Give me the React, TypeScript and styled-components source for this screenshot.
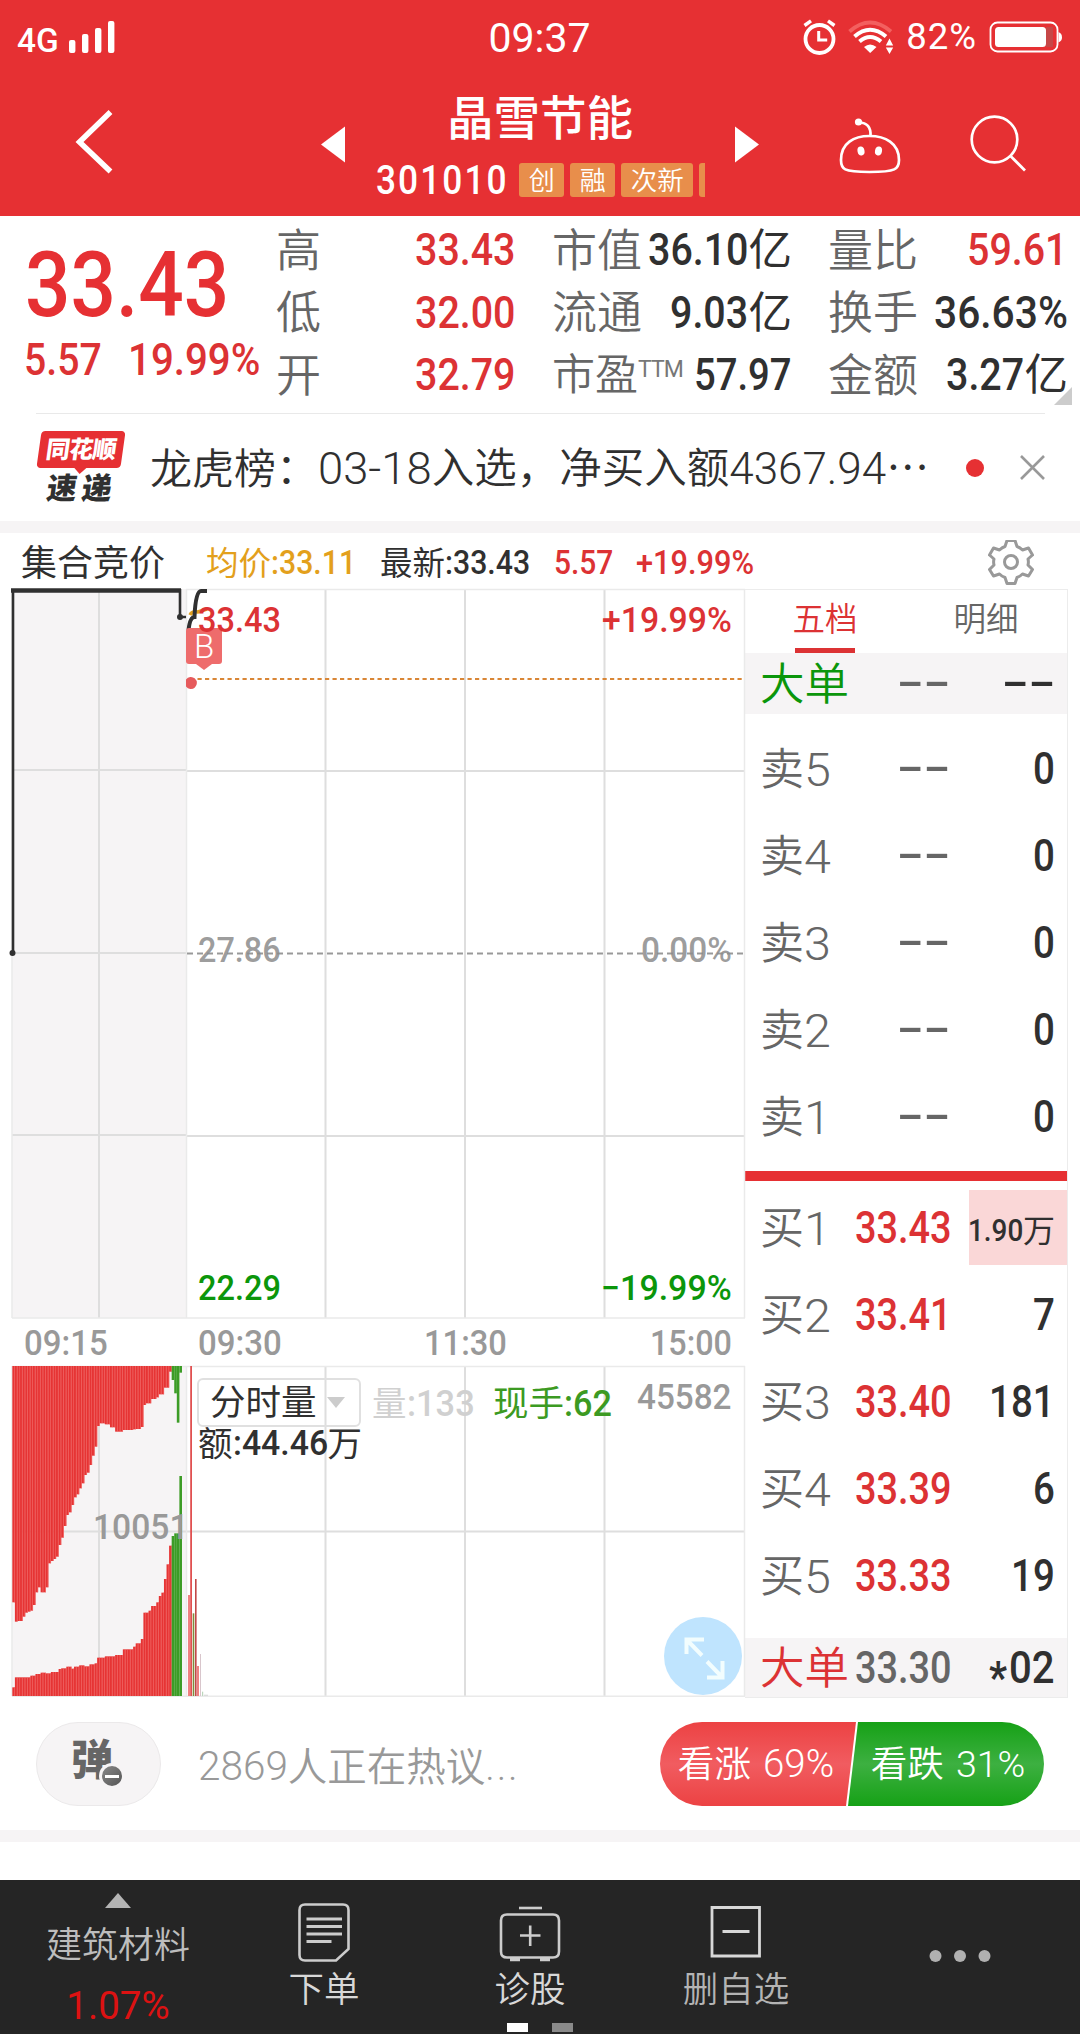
import React from "react";
import styled, { createGlobalStyle } from "styled-components";

const RED = "#e63033";
const NUM_RED = "#dc3234";
const INK = "#303030";
const GREY = "#666";
const AXIS = "#999";
const BAND = "#f6f4f5";

const Global = createGlobalStyle`
  * { box-sizing: border-box; }
  body { margin: 0; background: #fff; }
`;

const FONT = `Roboto, "Noto Sans CJK SC", sans-serif`;

/* ---------- text primitives ---------- */

const Cjk = styled.span<{ $size: number; $c?: string; $w?: number; $ls?: number }>`
  display: block;
  flex: none;
  font-family: ${FONT};
  font-size: ${(p) => p.$size}px;
  font-weight: ${(p) => p.$w ?? 350};
  color: ${(p) => p.$c ?? INK};
  letter-spacing: ${(p) => p.$ls ?? 0}px;
  line-height: 1;
  padding-top: 0.08em;
  white-space: nowrap;
`;

const NumText = styled.span<{ $size: number; $c: string; $w: number; $sx: number; $ls: number; $shrink: number }>`
  display: block;
  flex: none;
  font-family: ${FONT};
  font-size: ${(p) => p.$size}px;
  font-weight: ${(p) => p.$w};
  color: ${(p) => p.$c};
  letter-spacing: ${(p) => p.$ls}px;
  line-height: 1;
  padding-top: 0.03em;
  white-space: nowrap;
  transform: scaleX(${(p) => p.$sx});
  transform-origin: 0 50%;
  margin-right: ${(p) => p.$shrink}px;
`;

const ADVANCE: Record<string, number> = { ".": 0.28, ":": 0.258, "%": 0.74, "+": 0.557, "-": 0.35, "*": 0.45 };

/* Condensed figures: the box is pulled in by what the horizontal scale takes away. */
function Num({ children, size, c = INK, w = 500, sx = 0.875, ls = 0 }: {
  children: string; size: number; c?: string; w?: number; sx?: number; ls?: number;
}) {
  const natural = [...children].reduce((s, ch) => s + (ADVANCE[ch] ?? 0.565) * size + ls, 0);
  return (
    <NumText $size={size} $c={c} $w={w} $sx={sx} $ls={ls} $shrink={natural * (sx - 1)}>
      {children}
    </NumText>
  );
}

/* ---------- frame ---------- */

const Screen = styled.main`
  width: 1080px;
  height: 2034px;
  display: flex;
  flex-direction: column;
  overflow: hidden;
  background: #fff;
`;

const Band = styled.div`
  flex: none;
  height: 12px;
  background: ${BAND};
`;

/* ---------- header ---------- */

const Header = styled.header`
  flex: none;
  height: 216px;
  background: ${RED};
`;

const StatusBar = styled.div`
  height: 76px;
  display: grid;
  grid-template-columns: 1fr auto 1fr;
  align-items: center;
  padding: 0 18px 0 17px;
`;

const StatusSide = styled.div<{ $end?: boolean }>`
  display: flex;
  align-items: center;
  justify-content: ${(p) => (p.$end ? "flex-end" : "flex-start")};
  gap: ${(p) => (p.$end ? 12 : 10)}px;
  height: 76px;
  padding-bottom: 2px;
`;

const CarrierText = styled.div`
  padding-top: 4px;
`;

const TitleBar = styled.div`
  height: 140px;
  display: flex;
`;

const IconSlot = styled.div<{ $w: number }>`
  width: ${(p) => p.$w}px;
  flex: none;
`;

const TitleBlock = styled.div`
  width: 390px;
  display: flex;
  flex-direction: column;
  align-items: center;
  padding-top: 16px;
`;

const CodeRow = styled.div`
  display: flex;
  align-items: center;
  width: 329px;
  height: 34px;
  margin-top: 21px;
`;

const Badge = styled.span<{ $w: number; $ml?: number }>`
  flex: none;
  width: ${(p) => p.$w}px;
  height: 34px;
  margin-left: ${(p) => p.$ml ?? 6}px;
  border-radius: 3px;
  background: #e88e4b;
  display: flex;
  align-items: center;
  justify-content: center;
`;

const BadgeEdge = styled.span`
  flex: none;
  width: 6px;
  height: 34px;
  margin-left: 6px;
  border-radius: 3px 0 0 3px;
  background: #e88e4b;
`;

/* ---------- quote ---------- */

const Quote = styled.section`
  flex: none;
  height: 197px;
  display: flex;
  position: relative;
`;

const PriceBlock = styled.div`
  width: 277px;
  padding: 19px 0 0 24px;
`;

const PriceLine = styled.div<{ $h: number; $gap?: number; $pl?: number }>`
  display: flex;
  align-items: center;
  height: ${(p) => p.$h}px;
  gap: ${(p) => p.$gap ?? 0}px;
  padding-left: ${(p) => p.$pl ?? 0}px;
`;

const StatColumn = styled.div<{ $w: number; $ml: number }>`
  width: ${(p) => p.$w}px;
  flex: none;
  margin-left: ${(p) => p.$ml}px;
  padding-top: 2px;
`;

const StatRow = styled.div`
  display: flex;
  align-items: center;
  justify-content: space-between;
  height: 62.5px;
`;

const Inline = styled.div<{ $gap?: number }>`
  display: flex;
  align-items: center;
  gap: ${(p) => p.$gap ?? 0}px;
`;

const Ttm = styled.sup`
  font: 400 23px/1 ${FONT};
  color: #777;
  align-self: flex-start;
  margin-top: 7px;
  letter-spacing: -1px;
`;

const MoreCorner = styled.i`
  position: absolute;
  right: 8px;
  bottom: 8px;
  border-style: solid;
  border-width: 0 0 18px 18px;
  border-color: transparent transparent #ccc transparent;
`;

/* ---------- news ---------- */

const News = styled.section`
  flex: none;
  height: 108px;
  display: flex;
  align-items: center;
  position: relative;
  padding: 1px 0 0 37px;
  background: linear-gradient(#e9e9e9, #e9e9e9) 36px 0 / 1009px 1px no-repeat;
`;

const NewsLogo = styled.div`
  flex: none;
  width: 88px;
  height: 74px;
  display: flex;
  flex-direction: column;
  align-items: center;
`;

const NewsTag = styled.div`
  position: relative;
  flex: none;
  width: 84px;
  height: 37px;
  border-radius: 4px;
  background: ${RED};
  transform: skewX(-8deg);
  display: flex;
  align-items: center;
  justify-content: center;
  font: 900 24px/1 ${FONT};
  letter-spacing: -0.8px;
  color: #fff;
  &::after {
    content: "";
    position: absolute;
    left: 37px;
    top: 36px;
    border: 7px solid transparent;
    border-top-color: ${RED};
    border-bottom: 0;
  }
`;

const NewsWord = styled.div`
  margin-top: 6px;
  font: 900 30px/1 ${FONT};
  letter-spacing: 5px;
  padding-left: 1px;
  color: ${INK};
  transform: skewX(-8deg);
`;

const NewsText = styled.div`
  flex: none;
  width: 780px;
  margin-left: 25px;
  padding-top: 1px;
  display: flex;
  align-items: center;
`;

const Dot = styled.i`
  flex: none;
  width: 18px;
  height: 18px;
  border-radius: 50%;
  background: ${RED};
  margin: 0 36px;
`;

/* ---------- chart section ---------- */

const ChartHead = styled.div`
  flex: none;
  height: 56px;
  display: flex;
  align-items: center;
  padding: 3px 0 0 21px;
`;

const HeadItem = styled.div<{ $w: number }>`
  width: ${(p) => p.$w}px;
  display: flex;
  align-items: center;
`;

const Body = styled.section`
  flex: none;
  display: flex;
  height: 1109px;
  padding-left: 12px;
`;

const Charts = styled.div`
  width: 733px;
`;

const Plot = styled.div<{ $h: number }>`
  position: relative;
  height: ${(p) => p.$h}px;
  & > svg { display: block; margin-left: -12px; overflow: visible; }
`;

const Label = styled.div<{ $y: number; $x?: number; $r?: number }>`
  position: absolute;
  top: ${(p) => p.$y - 18}px;
  height: 36px;
  display: flex;
  align-items: center;
  ${(p) => (p.$r !== undefined ? `right: ${p.$r}px;` : `left: ${p.$x}px;`)}
`;

const Axis = styled.div`
  height: 48px;
  display: flex;
  align-items: center;
  padding-top: 2px;
`;

const Tick = styled.div<{ $pl: number; $w: number }>`
  width: ${(p) => p.$w}px;
  padding-left: ${(p) => p.$pl}px;
`;

const BuyMark = styled.div`
  position: absolute;
  left: 174px;
  top: 39px;
  width: 36px;
  height: 36px;
  border-radius: 3px;
  background: #ee6c6c;
  color: #fff;
  font: 350 33px/38px ${FONT};
  text-align: center;
  &::after {
    content: "";
    position: absolute;
    left: 10px;
    top: 36px;
    border: 8px solid transparent;
    border-top: 6px solid #ee6c6c;
    border-bottom: 0;
  }
`;

const Picker = styled.button`
  position: absolute;
  left: 185px;
  top: 12px;
  width: 164px;
  height: 49px;
  padding: 0 14px 0 11px;
  border: 2px solid #e0e0e0;
  border-radius: 6px;
  background: transparent;
  display: flex;
  align-items: center;
  justify-content: space-between;
`;

const Caret = styled.i`
  border: 9px solid transparent;
  border-top: 11px solid #ccc;
  border-bottom: 0;
`;

const Expand = styled.button`
  position: absolute;
  left: 652px;
  top: 251px;
  width: 78px;
  height: 78px;
  padding: 0;
  border: 0;
  border-radius: 50%;
  background: #bfe4fe;
`;

/* ---------- order book ---------- */

const Book = styled.aside`
  width: 323px;
  border: 1px solid #ececec;
  border-left: 0;
  display: flex;
  flex-direction: column;
`;

const Tabs = styled.div`
  height: 63px;
  display: flex;
  padding-left: 50px;
  gap: 101px;
`;

const Tab = styled.div<{ $on?: boolean }>`
  width: 60px;
  display: flex;
  justify-content: center;
  padding-top: 11px;
  border-bottom: 5px solid ${(p) => (p.$on ? NUM_RED : "transparent")};
`;

const BookRow = styled.div<{ $h: number; $tint?: boolean }>`
  height: ${(p) => p.$h}px;
  flex: none;
  display: grid;
  grid-template-columns: 95px 114px minmax(0, 1fr);
  align-items: center;
  padding-left: 15px;
  background: ${(p) => (p.$tint ? BAND : "transparent")};
`;

const Side = styled.div`
  display: flex;
  align-items: center;
`;

const NoPrice = styled.div`
  padding: 0 0 4px 42px;
`;

const Qty = styled.div<{ $hot?: boolean; $none?: boolean }>`
  display: flex;
  align-items: center;
  justify-content: flex-end;
  height: ${(p) => (p.$hot ? "75px" : "auto")};
  background: ${(p) => (p.$hot ? "#fad7d7" : "transparent")};
  padding: ${(p) => (p.$hot ? "4px 12px 0 0" : p.$none ? "0 11px 4px 0" : "0 12px 0 0")};
`;

const Star = styled.div`
  height: 44px;
  padding-top: 9px;
  margin-right: 2px;
`;

const Group = styled.div<{ $pt: number; $h: number }>`
  height: ${(p) => p.$h}px;
  padding-top: ${(p) => p.$pt}px;
`;

const Divider = styled.div`
  height: 10px;
  background: ${RED};
`;

/* ---------- talk row ---------- */

const Talk = styled.section`
  flex: none;
  height: 132px;
  display: flex;
  padding: 24px 36px;
`;

const Pill = styled.div`
  position: relative;
  flex: none;
  width: 125px;
  height: 84px;
  border-radius: 42px;
  border: 1px solid #ebe9ea;
  background: ${BAND};
  padding: 17px 0 0 34px;
  font: 900 42px/1 ${FONT};
  color: ${GREY};
`;

const MinusBadge = styled.i`
  position: absolute;
  left: 62px;
  top: 40px;
  width: 26px;
  height: 26px;
  border-radius: 50%;
  border: 3px solid ${BAND};
  background: linear-gradient(#fff, #fff) center / 14px 3px no-repeat, linear-gradient(135deg, #888, #555);
`;

const TalkText = styled.div`
  display: flex;
  align-items: center;
  width: 460px;
  padding: 4px 0 0 37px;
`;

const Vote = styled.div`
  margin-left: auto;
  width: 384px;
  height: 84px;
  border-radius: 42px;
  overflow: hidden;
  display: flex;
`;

const VoteHalf = styled.button<{ $up?: boolean }>`
  flex: none;
  width: ${(p) => (p.$up ? 196 : 198)}px;
  margin-left: ${(p) => (p.$up ? 0 : -10)}px;
  padding: 0 ${(p) => (p.$up ? 4 : 2)}px 0 ${(p) => (p.$up ? 0 : 8)}px;
  border: 0;
  display: flex;
  align-items: center;
  justify-content: center;
  gap: 12px;
  background: ${(p) =>
    p.$up
      ? "linear-gradient(#ec4243, #f15c60 50%, #ec4243)"
      : "linear-gradient(#16a116, #3db041 50%, #16a116)"};
  clip-path: ${(p) =>
    p.$up ? "polygon(0 0, 100% 0, 186px 100%, 0 100%)" : "polygon(12px 0, 100% 0, 100% 100%, 2px 100%)"};
`;

/* ---------- bottom bar ---------- */

const Nav = styled.nav`
  flex: none;
  height: 154px;
  margin-top: 38px;
  background: #252525;
  display: flex;
  position: relative;
`;

const NavItem = styled.div<{ $w: number; $pt: number; $gap: number; $pl?: number }>`
  flex: none;
  width: ${(p) => p.$w}px;
  padding-top: ${(p) => p.$pt}px;
  padding-left: ${(p) => p.$pl ?? 0}px;
  display: flex;
  flex-direction: column;
  align-items: center;
  gap: ${(p) => p.$gap}px;
  svg { display: block; flex: none; }
`;

const Change = styled.div`
  padding-top: 5px;
`;

const UpTriangle = styled.i`
  border: 13px solid transparent;
  border-bottom: 15px solid #b4b4b4;
  border-top: 0;
`;

const Pager = styled.div`
  position: absolute;
  left: 507px;
  bottom: 2px;
  display: flex;
  gap: 24px;
`;

const Page = styled.i<{ $on?: boolean }>`
  width: 21px;
  height: 9px;
  background: ${(p) => (p.$on ? "#fff" : "#8a8a8a")};
`;

/* ---------- chart data ---------- */

type Step = [number, number];

const askSteps: Step[] = [
  [37, 967], [45, 1025], [52, 1023], [68, 1010], [75, 998], [83, 995], [90, 992], [98, 975], [106, 937], [114, 922],
  [121, 937], [136, 922], [143, 850], [151, 843], [159, 837], [167, 830], [174, 795], [182, 773], [190, 738],
  [197, 705], [205, 697], [213, 675], [220, 652], [227, 643], [234, 625], [242, 610], [249, 585], [257, 578],
  [264, 555], [272, 527], [280, 500], [288, 438], [296, 430], [312, 433], [327, 442], [342, 455], [365, 450],
  [395, 448], [410, 447], [418, 441], [426, 375], [440, 370], [455, 357], [470, 352], [478, 343], [493, 323],
  [508, 275], [516, 300], [523, 340], [531, 428], [539, 278],
];

const bidSteps: Step[] = [
  [37, 1222], [45, 1192], [90, 1187], [106, 1182], [121, 1178], [136, 1180], [151, 1176], [174, 1167], [182, 1165],
  [197, 1160], [213, 1166], [220, 1160], [235, 1156], [250, 1159], [264, 1153], [280, 1150], [288, 1133],
  [312, 1129], [342, 1125], [365, 1108], [395, 1100], [403, 1090], [418, 1077], [426, 1007], [433, 998],
  [448, 992], [456, 978], [470, 967], [478, 948], [486, 938], [493, 897], [501, 853], [508, 797], [516, 768],
  [523, 760], [531, 760], [539, 588],
];

const BAR = 7.71;
const valueAt = (steps: Step[], x: number) =>
  steps.reduce((v, s) => (s[0] <= x + 3 ? s[1] : v), steps[0][1]);

const bars = Array.from({ length: 66 }, (_, i) => {
  const x = 37 + i * BAR;
  return {
    x: x / 3,
    ask: (valueAt(askSteps, x) - 258) / 3,
    bid: (valueAt(bidSteps, x) - 258) / 3,
    green: i >= 62,
  };
});

const tradeBars: [number, number, number, string][] = [
  [188, 945, 2, "#f08080"],
  [190.2, 258, 1.8, "#e05050"],
  [192.7, 1000, 1.6, "#7f8a3a"],
  [195, 897, 1.6, "#c24848"],
  [197, 1158, 2, "#ee7f7f"],
  [200, 1122, 1, "#d9c6cc"],
  [202, 1235, 1.2, "#bcd6bc"],
  [204, 1244, 4, "#dcdcdc"],
];

const GRID_X = [325.5, 465, 604.5];

/* ---------- pieces ---------- */

function SignalIcon() {
  return (
    <svg width="46" height="34" viewBox="0 0 46 34" fill="#fff">
      <rect x="0" y="20" width="6.4" height="13" rx="2" />
      <rect x="13" y="14" width="6.4" height="19" rx="2" />
      <rect x="26" y="8" width="6.4" height="25" rx="2" />
      <rect x="39" y="1" width="6.4" height="32" rx="2" />
    </svg>
  );
}

function AlarmIcon() {
  return (
    <svg width="33" height="36" viewBox="0 0 33 36" fill="none" stroke="#fff">
      <circle cx="16.5" cy="20" r="14" strokeWidth="3.8" />
      <path d="M15.7 12v9h8.5" strokeWidth="3" />
      <path d="M1.5 6.5 8 1.8M31.5 6.5 25 1.8" strokeWidth="3.4" />
    </svg>
  );
}

function WifiIcon() {
  return (
    <svg width="46" height="34" viewBox="0 0 46 34" fill="none">
      <path d="M1.5 11.5Q22 -6.5 43 11.5" stroke="#f3605f" strokeWidth="3.8" />
      <path d="M6.5 16.5Q22 3 38 16.5" stroke="#fff" strokeWidth="4" />
      <path d="M11.5 21.5Q22 12.5 33 21.5" stroke="#fff" strokeWidth="4" />
      <path d="M16 27Q22 22 28.5 27L22.2 33z" fill="#fff" />
      <path d="M37.8 25.5 41.5 18.5 45.2 25.5zM37.8 27.5h7.4L41.5 34z" fill="#fff" />
    </svg>
  );
}

function BatteryIcon() {
  return (
    <svg width="73" height="32" viewBox="0 0 73 32" fill="none">
      <rect x="1.5" y="1.5" width="67" height="29" rx="7" stroke="#fff" strokeWidth="1.8" />
      <rect x="6" y="6" width="51" height="20" rx="3.5" fill="#fff" />
      <path d="M57 6h7v20h-7z" fill="#c64747" />
      <path d="M69.5 11q3.5 1.5 3.5 5.2t-3.5 5.2z" fill="#fff" />
    </svg>
  );
}

function PriceChart() {
  return (
    <svg width="745" height="730" viewBox="0 589 745 730">
      <rect x="12" y="589" width="174" height="729" fill={BAND} />
      <g stroke="#dedede" strokeWidth="2" fill="none">
        <path d="M12 770H186M12 953H186M12 1135H186M99 590V1318" />
        <path d="M186 771H745M186 1136H745" />
        {GRID_X.map((x) => <path key={x} d={`M${x} 590V1318`} />)}
        <path d="M12 1318H745M186 589.5H745M12 589V1318M186.5 589V1318M744.5 589V1318" stroke="#eaeaea" strokeWidth="1.5" />
      </g>
      <path d="M187 953.5H745" stroke="#999" strokeWidth="2" strokeDasharray="6 4" />
      <path d="M190 679H745" stroke="#d98636" strokeWidth="2" strokeDasharray="4.2 3.3" />
      <path d="M190 615Q192 611 198 612L207 609" stroke="#e0a020" strokeWidth="3.5" fill="none" />
      <path d="M13 953V590.5" stroke={INK} strokeWidth="2.6" />
      <path d="M11 590.5H181" stroke={INK} strokeWidth="4.4" />
      <path d="M180 589V617H186" stroke={INK} strokeWidth="2.6" fill="none" />
      <circle cx="180" cy="617" r="3" fill={INK} />
      <circle cx="12.5" cy="953" r="3" fill={INK} />
      <path d="M188.5 630Q190 617 194.5 617Q195.5 591 201 591H207" stroke={INK} strokeWidth="4" fill="none" />
      <path d="M186 679.5a6 6 0 1 1 0 7z" fill="#e65a5c" />
    </svg>
  );
}

function VolumeChart() {
  return (
    <svg width="745" height="331" viewBox="0 0 745 331">
      <rect x="12" y="0" width="174" height="330" fill={BAND} />
      <g stroke="#dedede" strokeWidth="2" fill="none">
        <path d="M12 165.5H745M99 0V330" />
        {GRID_X.map((x) => <path key={x} d={`M${x} 0V330`} />)}
        <path d="M12 .5H745M12 330.3H745M12 0V330M186.5 0V330M744.5 0V330" stroke="#eaeaea" strokeWidth="1.5" />
      </g>
      {bars.map((b) => (
        <g key={b.x} fill={b.green ? "#3c9c26" : "#e63434"}>
          <rect x={b.x} y="0" width="2.6" height={b.ask} />
          <rect x={b.x} y={b.bid} width="2.6" height={330 - b.bid} />
          {!b.green && (
            <path d={`M${b.x + 2.3} 0v${b.ask}M${b.x + 2.3} ${b.bid}V330`} stroke="#f4706e" strokeWidth=".7" />
          )}
        </g>
      ))}
      {tradeBars.map(([x, top, w, fill]) => {
        const y = (top - 258) / 3;
        return <rect key={x} x={x} y={y} width={w} height={330 - y} fill={fill} />;
      })}
    </svg>
  );
}

const asks = ["5", "4", "3", "2", "1"];
const bids: [string, string, string][] = [
  ["1", "33.43", "1.90"],
  ["2", "33.41", "7"],
  ["3", "33.40", "181"],
  ["4", "33.39", "6"],
  ["5", "33.33", "19"],
];

function Dashes({ c = INK }: { c?: string }) {
  return <Num size={44} c={c} sx={1.79}>--</Num>;
}

export default function App() {
  return (
    <Screen>
      <Global />
      <Header>
        <StatusBar>
          <StatusSide>
            <CarrierText><Num size={34} c="#fff" sx={0.98}>4G</Num></CarrierText>
            <SignalIcon />
          </StatusSide>
          <Num size={41} c="#fff" w={400} sx={1}>09:37</Num>
          <StatusSide $end>
            <AlarmIcon />
            <WifiIcon />
            <Num size={36.5} c="#fff" w={400} sx={1} ls={1}>82%</Num>
            <BatteryIcon />
          </StatusSide>
        </StatusBar>
        <TitleBar>
          <IconSlot $w={321}>
            <svg width="321" height="140" viewBox="0 76 321 140" fill="none">
              <path d="M110.500 112 79.500 142l31 29.500" stroke="#fff" strokeWidth="5.500" />
            </svg>
          </IconSlot>
          <IconSlot $w={24}>
            <svg width="24" height="140" viewBox="0 76 24 140" fill="#fff">
              <path d="M0 144.500 24 126.500v36z" />
            </svg>
          </IconSlot>
          <TitleBlock>
            <Cjk $size={46.5} $c="#fff" $w={500}>晶雪节能</Cjk>
            <CodeRow>
              <Num size={41} c="#fff" sx={0.86} ls={2.4}>301010</Num>
              <Badge $w={45} $ml={11}><Cjk $size={26} $c="#fff">创</Cjk></Badge>
              <Badge $w={45}><Cjk $size={26} $c="#fff">融</Cjk></Badge>
              <Badge $w={72}><Cjk $size={26.5} $c="#fff">次新</Cjk></Badge>
              <BadgeEdge />
            </CodeRow>
          </TitleBlock>
          <IconSlot $w={24}>
            <svg width="24" height="140" viewBox="0 76 24 140" fill="#fff">
              <path d="M24 144.500 0 126.500v36z" />
            </svg>
          </IconSlot>
          <IconSlot $w={321}>
            <svg width="321" height="140" viewBox="759 76 321 140" fill="none" stroke="#fff" strokeWidth="2.700">
              <path d="M869.500 136C885 136 899 143 899 160C899 169 896 172 869.500 172S841 169 841 160C841 143 854 136 869.500 136z" />
              <path d="M870.500 136C871 127 867 122.500 859 122.500" />
              <circle cx="858.500" cy="122" r="3.600" fill="#fff" stroke="none" />
              <ellipse cx="861" cy="151" rx="3.500" ry="4.500" fill="#fff" stroke="none" transform="rotate(-12 861 151)" />
              <ellipse cx="878.500" cy="151" rx="3.500" ry="4.500" fill="#fff" stroke="none" transform="rotate(12 878.500 151)" />
              <circle cx="994.500" cy="139.500" r="22.800" />
              <path d="M1010.500 156 1025 170.500" />
            </svg>
          </IconSlot>
        </TitleBar>
      </Header>

      <Quote>
        <PriceBlock>
          <PriceLine $h={100} $pl={1}><Num size={90} c={RED} sx={0.89}>33.43</Num></PriceLine>
          <PriceLine $h={50} $gap={26}>
            <Num size={44.5} c={NUM_RED} sx={0.88}>5.57</Num>
            <Num size={44.5} c={NUM_RED} sx={0.905}>19.99%</Num>
          </PriceLine>
        </PriceBlock>
        <StatColumn $w={240} $ml={-1}>
          <StatRow><Cjk $size={45} $c={GREY}>高</Cjk><Num size={45} c={NUM_RED}>33.43</Num></StatRow>
          <StatRow><Cjk $size={45} $c={GREY}>低</Cjk><Num size={45} c={NUM_RED}>32.00</Num></StatRow>
          <StatRow><Cjk $size={45} $c={GREY}>开</Cjk><Num size={45} c={NUM_RED}>32.79</Num></StatRow>
        </StatColumn>
        <StatColumn $w={240} $ml={36}>
          <StatRow>
            <Cjk $size={45} $c={GREY}>市值</Cjk>
            <Inline><Num size={45}>36.10</Num><Cjk $size={43.5} $w={400}>亿</Cjk></Inline>
          </StatRow>
          <StatRow>
            <Cjk $size={45} $c={GREY}>流通</Cjk>
            <Inline><Num size={45}>9.03</Num><Cjk $size={43.5} $w={400}>亿</Cjk></Inline>
          </StatRow>
          <StatRow>
            <Inline><Cjk $size={43} $c={GREY}>市盈</Cjk><Ttm>TTM</Ttm></Inline>
            <Num size={45} sx={0.85}>57.97</Num>
          </StatRow>
        </StatColumn>
        <StatColumn $w={240} $ml={36}>
          <StatRow><Cjk $size={45} $c={GREY}>量比</Cjk><Num size={45} c={NUM_RED}>59.61</Num></StatRow>
          <StatRow><Cjk $size={45} $c={GREY}>换手</Cjk><Num size={45} sx={0.905}>36.63%</Num></StatRow>
          <StatRow>
            <Cjk $size={45} $c={GREY}>金额</Cjk>
            <Inline><Num size={45}>3.27</Num><Cjk $size={43.5} $w={400}>亿</Cjk></Inline>
          </StatRow>
        </StatColumn>
        <MoreCorner />
      </Quote>

      <News>
        <NewsLogo>
          <NewsTag>同花顺</NewsTag>
          <NewsWord>速递</NewsWord>
        </NewsLogo>
        <NewsText>
          <Cjk $size={42}>龙虎榜：</Cjk>
          <Num size={44} w={350} sx={1.03}>03-18</Num>
          <Cjk $size={42.5}>入选，净买入额</Cjk>
          <Num size={44} w={350} sx={1}>4367.94</Num>
          <Cjk $size={43}>⋯</Cjk>
        </NewsText>
        <Dot />
        <svg width="25" height="25" viewBox="0 0 25 25" stroke="#999" strokeWidth="2.600">
          <path d="M1 1 24 24M24 1 1 24" />
        </svg>
      </News>

      <Band />

      <ChartHead>
        <HeadItem $w={185}><Cjk $size={36} $w={400}>集合竞价</Cjk></HeadItem>
        <HeadItem $w={174}>
          <Cjk $size={32.5} $c="#e3a01c" $w={400}>均价</Cjk>
          <Num size={32.5} c="#e3a01c" sx={0.93}>:33.11</Num>
        </HeadItem>
        <HeadItem $w={174}>
          <Cjk $size={32.5} $w={400}>最新</Cjk>
          <Num size={32.5} sx={0.93}>:33.43</Num>
        </HeadItem>
        <HeadItem $w={82}><Num size={32.5} c={NUM_RED} sx={0.92}>5.57</Num></HeadItem>
        <HeadItem $w={352}><Num size={32.5} c={NUM_RED} sx={0.945}>+19.99%</Num></HeadItem>
        <svg width="46" height="46" viewBox="-23 -22 46 46" fill="none" stroke="#999" strokeWidth="3" strokeLinejoin="round">
          <path d="M-4 -21.500H4L6 -15.500Q9 -14.500 11.500 -12L17.500 -14L21.500 -7L17 -3Q17.800 0 17 3L21.500 7.500L17.500 14L11.500 12Q9 14.500 6 15.500L4 21.500H-4L-6 15.500Q-9 14.500 -11.500 12L-17.500 14L-21.500 7.500L-17 3Q-17.800 0 -17 -3L-21.500 -7L-17.500 -14L-11.500 -12Q-9 -14.500 -6 -15.500z" />
          <circle r="6.500" />
        </svg>
      </ChartHead>

      <Body>
        <Charts>
          <Plot $h={729}>
            <PriceChart />
            <BuyMark>B</BuyMark>
            <Label $x={186} $y={31}><Num size={35} c={NUM_RED} sx={0.93}>33.43</Num></Label>
            <Label $r={13} $y={31}><Num size={35} c={NUM_RED} sx={0.965}>+19.99%</Num></Label>
            <Label $x={186} $y={361}><Num size={35} c="rgba(140, 140, 140, 0.85)" sx={0.925}>27.86</Num></Label>
            <Label $r={13} $y={361}><Num size={35} c="rgba(140, 140, 140, 0.85)" sx={0.955}>0.00%</Num></Label>
            <Label $x={186} $y={699}><Num size={35} c="#0b960b" sx={0.93}>22.29</Num></Label>
            <Label $r={13} $y={699}><Num size={35} c="#0b960b" sx={0.97}>−19.99%</Num></Label>
          </Plot>
          <Axis>
            <Tick $pl={12} $w={174}><Num size={35.5} c={AXIS} sx={0.93}>09:15</Num></Tick>
            <Tick $pl={12} $w={226}><Num size={35.5} c={AXIS} sx={0.93}>09:30</Num></Tick>
            <Tick $pl={12} $w={226}><Num size={35.5} c={AXIS} sx={0.92}>11:30</Num></Tick>
            <Tick $pl={12} $w={107}><Num size={35.5} c={AXIS} sx={0.91}>15:00</Num></Tick>
          </Axis>
          <Plot $h={331}>
            <VolumeChart />
            <Label $x={81} $y={161}><Num size={35} c={AXIS} sx={0.96}>10051</Num></Label>
            <Picker><Cjk $size={35.5} $w={400}>分时量</Cjk><Caret /></Picker>
            <Label $x={360} $y={37}>
              <Cjk $size={34.5} $c="#d0d0d0" $w={400}>量</Cjk><Num size={36} c="#d0d0d0" sx={0.955}>:133</Num>
            </Label>
            <Label $x={481} $y={37}>
              <Cjk $size={35.5} $c="#3c9a22" $w={400}>现手</Cjk><Num size={36} c="#3c9a22" sx={0.95}>:62</Num>
            </Label>
            <Label $r={13} $y={31}><Num size={35} c={AXIS} sx={0.95}>45582</Num></Label>
            <Label $x={186} $y={77}>
              <Cjk $size={34.5} $w={400}>额</Cjk><Num size={35} sx={0.965}>:44.46</Num><Cjk $size={34.5} $w={400}>万</Cjk>
            </Label>
            <Expand>
              <svg width="78" height="78" viewBox="0 0 78 78" fill="none" stroke="#f2fdfe" strokeWidth="4">
                <path d="M40 22.500H22.500V37M22.500 22.500 38 38.500M43 60.500H58.500V44M58.500 60.500 43 44.500" />
              </svg>
            </Expand>
          </Plot>
        </Charts>

        <Book>
          <Tabs>
            <Tab $on><Cjk $size={32.5} $c={NUM_RED}>五档</Cjk></Tab>
            <Tab><Cjk $size={32.5} $c={GREY}>明细</Cjk></Tab>
          </Tabs>
          <BookRow $h={61} $tint>
            <Side><Cjk $size={44.5} $c="#0b960b">大单</Cjk></Side>
            <NoPrice><Dashes c={GREY} /></NoPrice>
            <Qty $none><Dashes /></Qty>
          </BookRow>
          <Group $pt={11} $h={457}>
            {asks.map((n) => (
              <BookRow key={n} $h={87}>
                <Side><Cjk $size={44} $c={GREY}>卖</Cjk><Num size={47} c={GREY} w={350} sx={1.03}>{n}</Num></Side>
                <NoPrice><Dashes c={GREY} /></NoPrice>
                <Qty><Num size={44}>0</Num></Qty>
              </BookRow>
            ))}
          </Group>
          <Divider />
          <Group $pt={3} $h={457}>
            {bids.map(([n, price, qty]) => (
              <BookRow key={n} $h={87}>
                <Side><Cjk $size={44} $c={GREY}>买</Cjk><Num size={47} c={GREY} w={350} sx={1.03}>{n}</Num></Side>
                <Num size={44} c={NUM_RED} sx={0.86}>{price}</Num>
                <Qty $hot={n === "1"}>
                  {n === "1" ? (
                    <><Num size={32} sx={0.87}>{qty}</Num><Cjk $size={32} $w={400}>万</Cjk></>
                  ) : (
                    <Num size={44}>{qty}</Num>
                  )}
                </Qty>
              </BookRow>
            ))}
          </Group>
          <BookRow $h={59} $tint>
            <Side><Cjk $size={44.5} $c={NUM_RED}>大单</Cjk></Side>
            <Num size={44} c={GREY} sx={0.86}>33.30</Num>
            <Qty><Star><Num size={44} w={700} sx={0.9}>*</Num></Star><Num size={44} sx={0.91}>02</Num></Qty>
          </BookRow>
        </Book>
      </Body>

      <Talk>
        <Pill>弹<MinusBadge /></Pill>
        <TalkText>
          <Num size={40.5} c={AXIS} w={350} sx={1}>2869</Num>
          <Cjk $size={39.5} $c={AXIS}>人正在热议</Cjk>
          <Num size={40} c={AXIS} w={350} sx={1} ls={1.8}>...</Num>
        </TalkText>
        <Vote>
          <VoteHalf $up><Cjk $size={36.6} $c="#fff">看涨</Cjk><Num size={38.5} c="#fff" w={350} sx={1}>69%</Num></VoteHalf>
          <VoteHalf><Cjk $size={36.6} $c="#fff">看跌</Cjk><Num size={37.5} c="#fff" w={350} sx={1}>31%</Num></VoteHalf>
        </Vote>
      </Talk>

      <Band />

      <Nav>
        <NavItem $w={236} $pt={13} $gap={17}>
          <UpTriangle />
          <Cjk $size={36} $c="#bdbdbd">建筑材料</Cjk>
          <Change><Num size={38.5} c="#dc1212" w={400} sx={1}>1.07%</Num></Change>
        </NavItem>
        <NavItem $w={176} $pt={22} $gap={8}>
          <svg width="54" height="60" viewBox="0 0 54 60" fill="none" stroke="#ccc" strokeWidth="2.600">
            <path d="M8 2.500H46Q51.500 2.500 51.500 8V47L39 58.500H8Q2.500 58.500 2.500 53V8Q2.500 2.500 8 2.500z" />
            <path d="M9.500 17H45M9.500 24.500H45M9.500 32H45M9.500 39.500H34.500" strokeWidth="3.200" />
          </svg>
          <Cjk $size={35.5} $c="#d8d8d8">下单</Cjk>
        </NavItem>
        <NavItem $w={236} $pt={22} $gap={8}>
          <svg width="64" height="60" viewBox="0 0 64 60" fill="none" stroke="#ccc" strokeWidth="2.600">
            <path d="M21 6H44" />
            <path d="M9 12.500H55Q61 12.500 61 18.500V49.500Q61 55.500 55 55.500H9Q3 55.500 3 49.500V18.500Q3 12.500 9 12.500z" />
            <path d="M12 57.500H22M42 57.500H52" strokeWidth="3.500" />
            <path d="M22 33.500H42.500M32.200 23.500V44" />
          </svg>
          <Cjk $size={35.5} $c="#d8d8d8">诊股</Cjk>
        </NavItem>
        <NavItem $w={176} $pt={22} $gap={8}>
          <svg width="54" height="60" viewBox="0 0 54 60" fill="none" stroke="#d8d8d8" strokeWidth="2.800">
            <path d="M3 5.500H50.500V54H3zM13.500 29.500H40.500" />
          </svg>
          <Cjk $size={35.5} $c="#b4b4b4">删自选</Cjk>
        </NavItem>
        <NavItem $w={256} $pt={70} $gap={0} $pl={16}>
          <svg width="62" height="12" viewBox="0 0 62 12" fill="#b0b0b0">
            <circle cx="6.500" cy="6" r="6" /><circle cx="31" cy="6" r="6" /><circle cx="55.500" cy="6" r="6" />
          </svg>
        </NavItem>
        <Pager><Page $on /><Page /></Pager>
      </Nav>
    </Screen>
  );
}
